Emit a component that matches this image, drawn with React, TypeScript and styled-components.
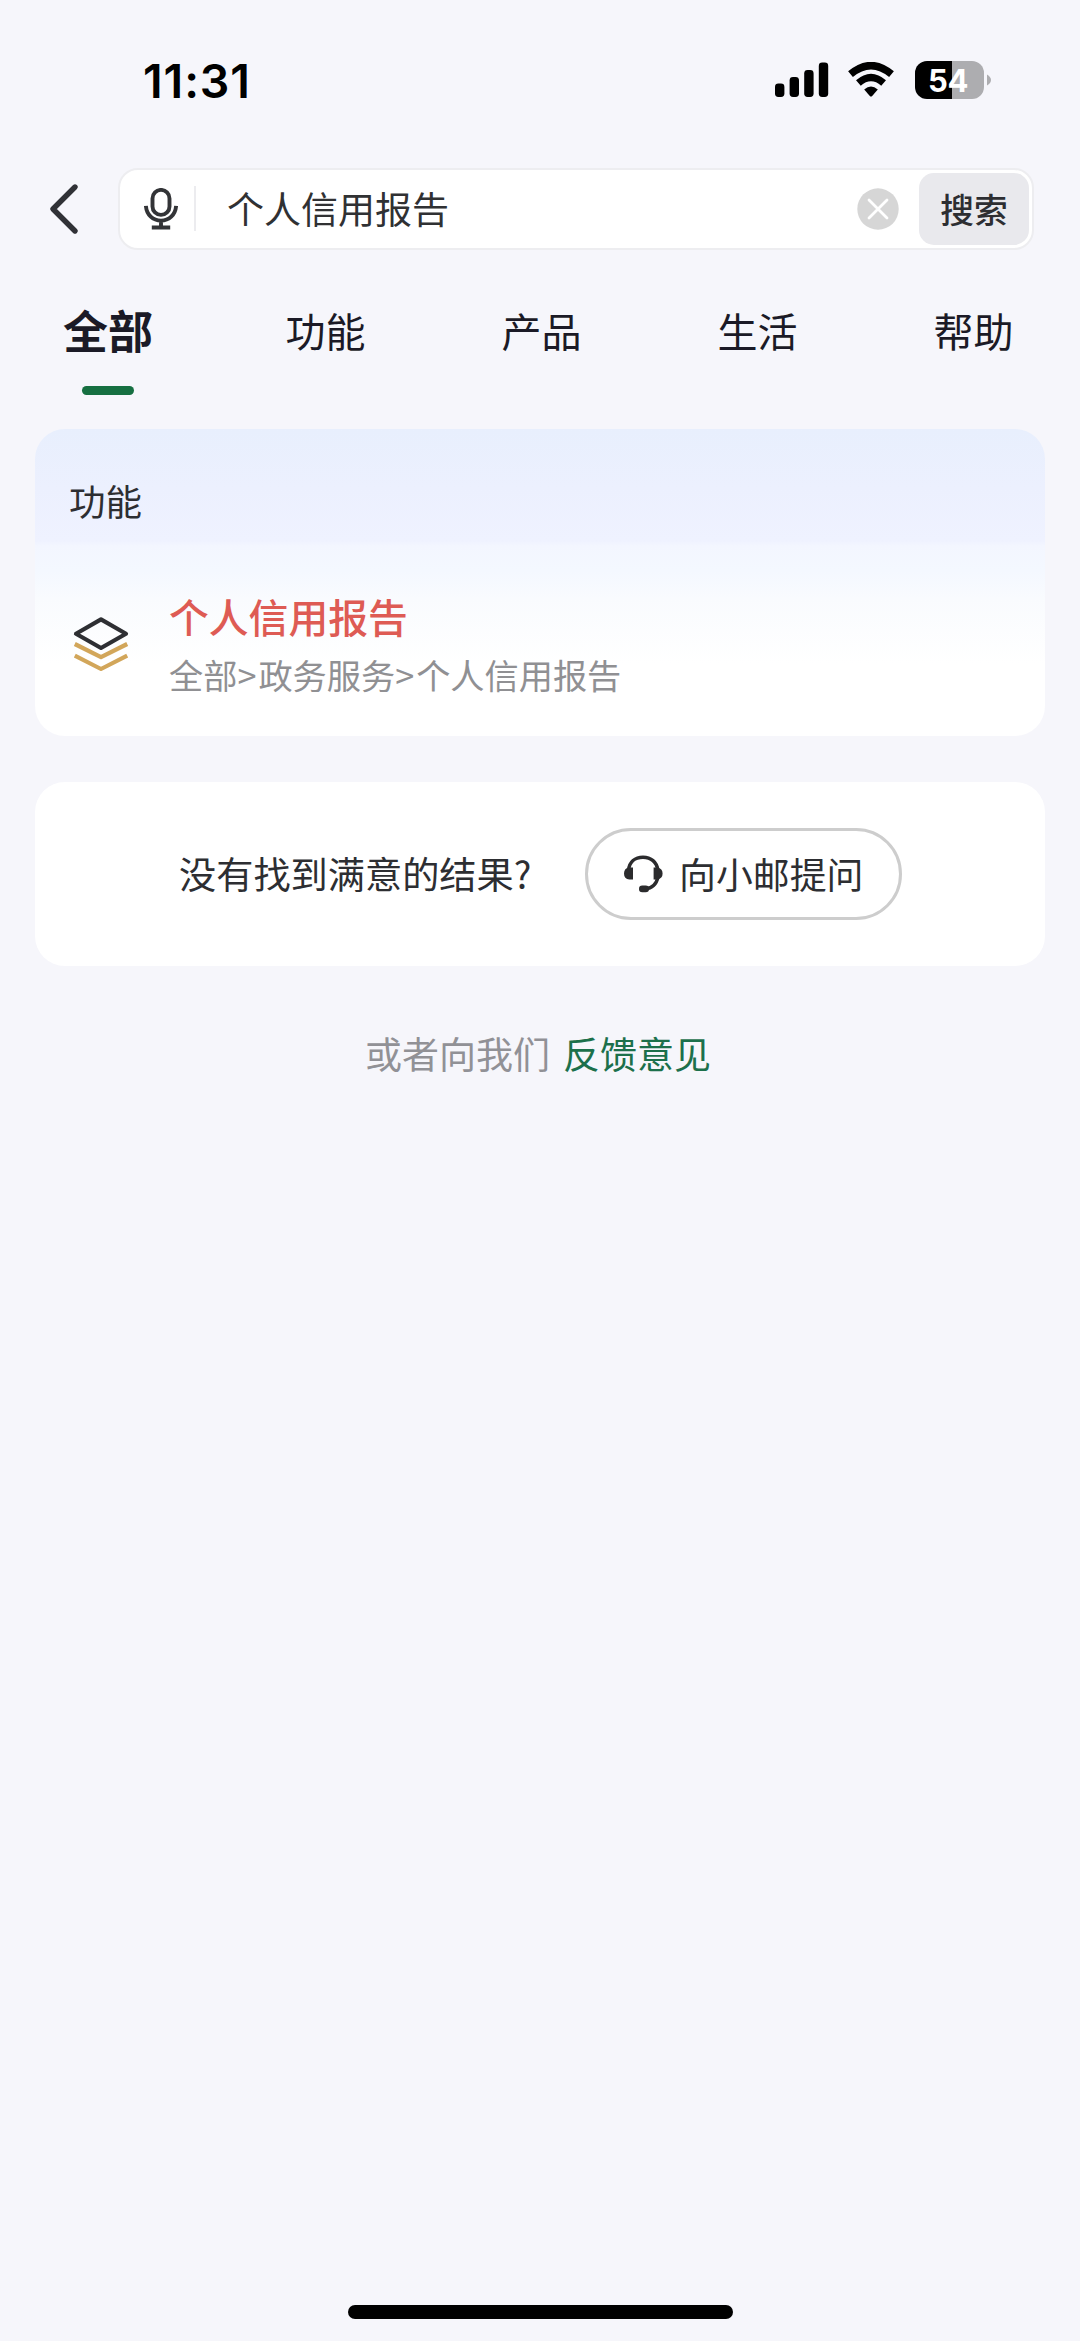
import React from "react";
import styled, { createGlobalStyle } from "styled-components";

const GlobalStyle = createGlobalStyle`
  * { box-sizing: border-box; }
  html, body { margin: 0; padding: 0; background: #f6f6fb; }
  body {
    font-family: "Noto Sans CJK SC", "Noto Sans", sans-serif;
    color: #2d2e32;
  }
  button { font-family: inherit; color: inherit; padding: 0; margin: 0; border: 0; background: none; }
  svg { display: block; flex: none; }
`;

const Screen = styled.div`
  width: 1080px;
  height: 2341px;
  display: flex;
  flex-direction: column;
  background: #f6f6fb;
  overflow: hidden;
`;

const StatusBar = styled.header`
  height: 160px;
  padding: 0 89px 0 143px;
  display: flex;
  justify-content: space-between;
  align-items: center;
`;

const Clock = styled.span`
  font: 600 46.5px/46px Inter, sans-serif;
  letter-spacing: 0.9px;
  padding-top: 1px;
  color: #000;
`;

const StatusIcons = styled.div`
  display: flex;
  align-items: center;
`;

const Battery = styled.div`
  width: 69px;
  height: 38px;
  margin-left: 21px;
  padding-right: 3px;
  border-radius: 12px;
  background: linear-gradient(to right, #000 37px, #adadb0 37px);
  color: #fff;
  font: 700 31px/39px Inter, sans-serif;
  letter-spacing: -0.5px;
  text-align: center;
`;

const SearchRow = styled.div`
  height: 97px;
  padding: 0 46px 0 48px;
  display: flex;
  align-items: center;
`;

const BackButton = styled.button`
  width: 70px;
  height: 60px;
  display: flex;
  align-items: center;
`;

const SearchBox = styled.div`
  flex: 1;
  height: 82px;
  display: flex;
  align-items: center;
  padding: 0 3px 0 24px;
  border: 2px solid #ededf0;
  border-radius: 20px;
  background: #fff;
`;

const Divider = styled.i`
  width: 2px;
  height: 45px;
  margin-left: 16px;
  background: #ececef;
`;

const Query = styled.span`
  flex: 1;
  margin-left: 31px;
  padding-bottom: 1px;
  font-size: 37px;
  line-height: 50px;
  color: #303133;
`;

const SearchButton = styled.button`
  width: 110px;
  height: 72px;
  margin-left: 20px;
  border-radius: 15px;
  background: #e9e9ed;
  font-size: 33.7px;
  line-height: 66px;
  font-weight: 500;
`;

const Tabs = styled.nav`
  height: 172px;
  display: grid;
  grid-template-columns: repeat(5, 216px);
`;

const Tab = styled.div<{ $active?: boolean }>`
  display: flex;
  flex-direction: column;
  align-items: center;
  padding: 43px 0 0 ${(p) => (p.$active ? 0 : 3)}px;
  font-size: ${(p) => (p.$active ? 45 : 40)}px;
  font-weight: ${(p) => (p.$active ? 700 : 400)};
  line-height: 60px;
  color: #1b1a26;
  &::after {
    content: "";
    width: 52px;
    height: 9px;
    margin-top: 26px;
    border-radius: 5px;
    background: ${(p) => (p.$active ? "#166f41" : "transparent")};
  }
`;

const Card = styled.section`
  margin: 0 35px;
  border-radius: 30px;
  background: #fff;
`;

const ResultCard = styled(Card)`
  height: 307px;
  padding: 46px 34px 0;
  background: linear-gradient(to bottom, #e8effd 0, #ecf0fe 60px, #eff2ff 112px, #f3f6ff 117px, #f4f8ff 142px, #f9fbfe 170px, #fff 235px);
`;

const GroupTitle = styled.h2`
  margin: 0;
  font-size: 36.5px;
  line-height: 52px;
  font-weight: 400;
`;

const Result = styled.div`
  display: flex;
  align-items: center;
  margin-top: 59px;
  padding-left: 2px;
  gap: 38px;
`;

const ResultTitle = styled.div`
  font-size: 39.8px;
  line-height: 60px;
  font-weight: 500;
  color: #de5b54;
`;

const ResultPath = styled.div`
  font-size: 34.2px;
  line-height: 56px;
  color: #909093;
`;

const Separator = styled.span`
  letter-spacing: 2px;
`;

const AskCard = styled(Card)`
  height: 184px;
  margin-top: 46px;
  padding-left: 144px;
  display: flex;
  align-items: center;
  font-size: 37.2px;
`;

const Question = styled.span`
  width: 406px;
  padding-bottom: 3px;
  line-height: 54px;
  white-space: nowrap;
`;

const AskButton = styled.button`
  width: 317px;
  height: 92px;
  display: flex;
  align-items: center;
  padding-left: 36px;
  gap: 16px;
  border: 3px solid #cdcdcd;
  border-radius: 46px;
  font-size: 36.9px;
  line-height: 54px;
`;

const AskLabel = styled.span`
  padding-bottom: 3px;
`;

const Feedback = styled.p`
  margin: 60px 0 0 365px;
  display: flex;
  gap: 13px;
  font-size: 37px;
  line-height: 54px;
  color: #919196;
`;

const FeedbackLink = styled.a`
  color: #1c704b;
`;

const HomeIndicator = styled.div`
  width: 385px;
  height: 14px;
  margin: auto auto 22px;
  border-radius: 7px;
  background: #000;
`;

const SignalIcon = () => (
  <svg width="54" height="36" viewBox="0 0 54 36">
    <rect x="0" y="21.5" width="9.4" height="13.5" rx="3.4" />
    <rect x="14.6" y="15" width="9.4" height="20" rx="3.4" />
    <rect x="29.2" y="8" width="9.4" height="27" rx="3.4" />
    <rect x="43.8" y="0.5" width="9.4" height="34.5" rx="3.4" />
  </svg>
);

const WifiSvg = styled.svg`
  margin-left: 19px;
`;

const WifiIcon = () => (
  <WifiSvg width="46" height="36" viewBox="0 0 46 36">
    <path d="M2.5 12.2Q23-5 43.5 12.2" fill="none" stroke="#000" strokeWidth="7.4" />
    <path d="M10.4 21Q23 10 35.6 21" fill="none" stroke="#000" strokeWidth="7.2" />
    <path d="M16.2 27.6Q23 21.6 29.8 27.6L24.2 33.9Q23 35.2 21.8 33.9Z" />
  </WifiSvg>
);

const MicIcon = () => (
  <svg width="34" height="42" viewBox="0 0 34 42" fill="none" stroke="#333437" strokeWidth="3.9">
    <rect x="8.5" y="1.9" width="17" height="25" rx="8.5" />
    <path d="M1.9 17.8C2.6 27 9 32.6 17 32.6S31.4 27 32.1 17.8M17 32.6V39M7.8 39.5H26.2" />
  </svg>
);

const LayersIcon = () => (
  <svg width="60" height="60" viewBox="0 0 60 60" fill="none" strokeWidth="4.2" strokeLinejoin="round">
    <path d="M3.8 30L30 43.2L56.2 30M3.8 41.6L30 55L56.2 41.6" stroke="#d2a65a" />
    <path d="M30 5.4L55 19.7L30 34L5 19.7Z" stroke="#2e2f33" />
  </svg>
);

const HeadsetIcon = () => (
  <svg width="39" height="38" viewBox="0 0 39 38">
    <path d="M4.6 15C5.4 7 11 2.2 19 2.2S32.8 7 33.8 15M34 22C32.5 29 28 33.4 21 34" fill="none" stroke="#2b2b2d" strokeWidth="3.5" />
    <path d="M9 12.4V24.6H5.4Q0 24 0 18.5T5.4 12.4ZM29.6 12.4H33.4Q38.6 13.4 38.6 18.5T33.4 24.6H29.6Z" fill="#2b2b2d" />
    <rect x="15" y="30.6" width="10" height="6.6" rx="3.3" fill="#2b2b2d" />
  </svg>
);

const TABS = ["全部", "功能", "产品", "生活", "帮助"];

export default function App() {
  return (
    <>
      <GlobalStyle />
      <Screen>
        <StatusBar>
          <Clock>11:31</Clock>
          <StatusIcons>
            <SignalIcon />
            <WifiIcon />
            <Battery>54</Battery>
            <svg width="7" height="12" viewBox="0 0 7 12">
              <path d="M3 .5Q7 3 7 6T3 11.5Z" fill="#adadb0" />
            </svg>
          </StatusIcons>
        </StatusBar>
        <SearchRow>
          <BackButton aria-label="返回">
            <svg width="32" height="52" viewBox="0 0 32 52" fill="none" stroke="#303136" strokeWidth="5.4" strokeLinecap="round" strokeLinejoin="round">
              <path d="M27 4L5 26L27 48" />
            </svg>
          </BackButton>
          <SearchBox>
            <MicIcon />
            <Divider />
            <Query>个人信用报告</Query>
            <svg width="42" height="42" viewBox="0 0 42 42">
              <circle cx="21" cy="21" r="20.7" fill="#d6d6d6" />
              <path d="M12 12L30 30M30 12L12 30" stroke="#fff" strokeWidth="2.8" strokeLinecap="round" />
            </svg>
            <SearchButton>搜索</SearchButton>
          </SearchBox>
        </SearchRow>
        <Tabs>
          {TABS.map((label, i) => (
            <Tab key={label} $active={i === 0}>{label}</Tab>
          ))}
        </Tabs>
        <ResultCard>
          <GroupTitle>功能</GroupTitle>
          <Result>
            <LayersIcon />
            <div>
              <ResultTitle>个人信用报告</ResultTitle>
              <ResultPath>
                全部<Separator>&gt;</Separator>政务服务<Separator>&gt;</Separator>个人信用报告
              </ResultPath>
            </div>
          </Result>
        </ResultCard>
        <AskCard>
          <Question>没有找到满意的结果?</Question>
          <AskButton>
            <HeadsetIcon />
            <AskLabel>向小邮提问</AskLabel>
          </AskButton>
        </AskCard>
        <Feedback>
          或者向我们
          <FeedbackLink>反馈意见</FeedbackLink>
        </Feedback>
        <HomeIndicator />
      </Screen>
    </>
  );
}
